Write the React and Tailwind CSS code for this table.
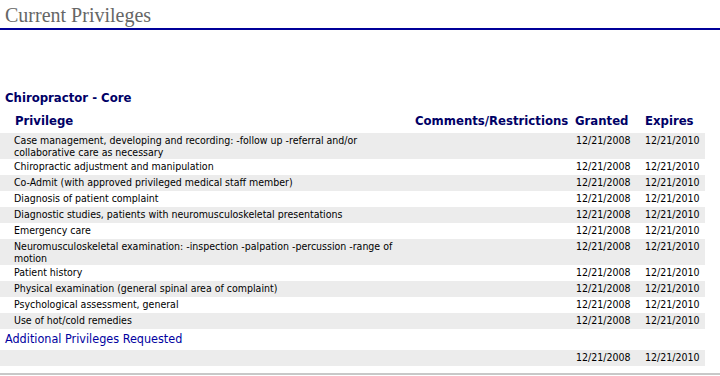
const rows = [
  "Case management, developing and recording: -follow up -referral and/or collaborative care as necessary",
  "Chiropractic adjustment and manipulation",
  "Co-Admit (with approved privileged medical staff member)",
  "Diagnosis of patient complaint",
  "Diagnostic studies, patients with neuromusculoskeletal presentations",
  "Emergency care",
  "Neuromusculoskeletal examination: -inspection -palpation -percussion -range of motion",
  "Patient history",
  "Physical examination (general spinal area of complaint)",
  "Psychological assessment, general",
  "Use of hot/cold remedies",
];

const body = { fontFamily: '"DejaVu Sans Condensed", "DejaVu Sans", sans-serif' };

function Row({ text, gray }) {
  return (
    <div
      className={
        "grid grid-cols-[415px_160px_70px_60px] min-h-[16px] text-[10.5px] leading-[12px] text-black " +
        (gray ? "bg-[#ececec]" : "bg-white")
      }
    >
      <div className="pl-[14px] pr-[8px] py-[1px]">{text}</div>
      <div className="py-[1px]"></div>
      <div className="pl-[1px] py-[1px]">12/21/2008</div>
      <div className="py-[1px]">12/21/2010</div>
    </div>
  );
}

export default function App() {
  return (
    <div className="w-[720px] h-[376px] bg-white overflow-hidden" style={body}>
      <div className="h-[30px] pt-[2px] pl-[5px] border-b-2 border-[#000099]">
        <div
          className="text-[20px] leading-[26px] text-[#666666]"
          style={{ fontFamily: '"Liberation Serif", serif' }}
        >
          Current Privileges
        </div>
      </div>
      <div className="mt-[60px] pl-[5px] h-[16px] text-[13px] leading-[16px] font-bold text-[#000066]">
        Chiropractor - Core
      </div>
      <div className="w-[705px] grid grid-cols-[415px_160px_70px_60px] pt-[7px] pb-[4px] text-[13px] leading-[16px] font-bold text-[#000066]">
        <div className="pl-[15px]">Privilege</div>
        <div>Comments/Restrictions</div>
        <div>Granted</div>
        <div>Expires</div>
      </div>
      <div className="w-[705px] flex flex-col">
        {rows.map((r, i) => (
          <Row key={i} text={r} gray={i % 2 === 0} />
        ))}
      </div>
      <div className="pl-[5px] pt-[2px] pb-[3px] text-[12.5px] leading-[16px] text-[#0000a0]">
        Additional Privileges Requested
      </div>
      <div className="w-[705px]">
        <Row text="" gray />
      </div>
      <div className="mt-[7px] h-[2px] bg-[#c8c8c8]"></div>
    </div>
  );
}
